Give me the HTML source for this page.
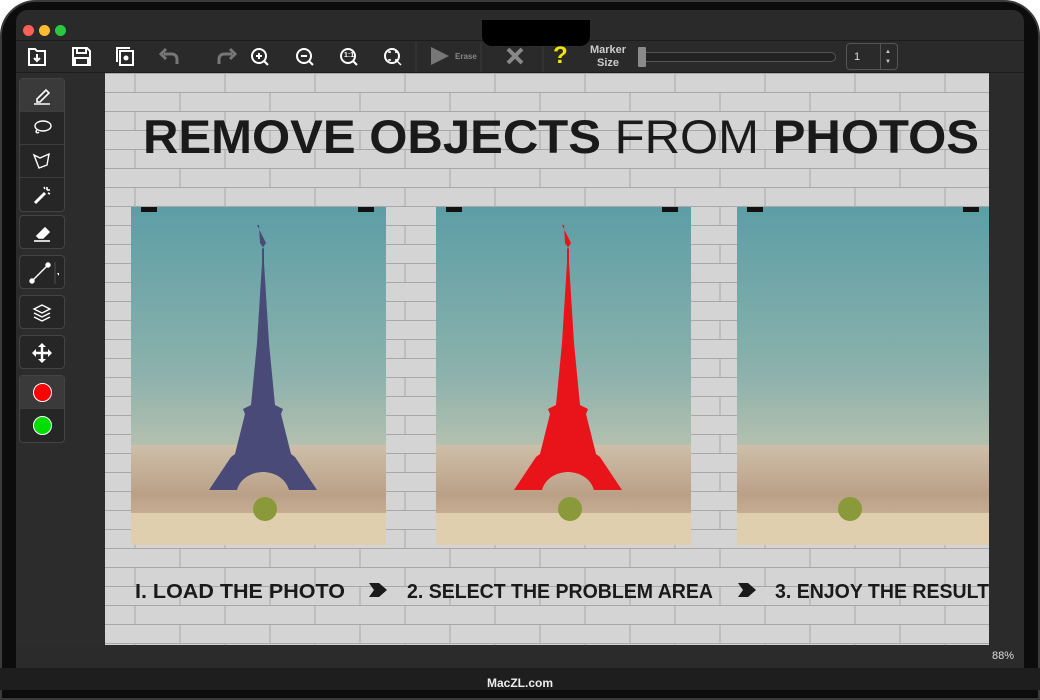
<!DOCTYPE html>
<html><head><meta charset="utf-8"><style>
*{margin:0;padding:0;box-sizing:border-box}
body{width:1040px;height:690px;background:#fff;overflow:hidden;font-family:"Liberation Sans",sans-serif;position:relative}
.bezel{position:absolute;left:0;top:0;width:1040px;height:700px;background:#0c0c0c;border-radius:36px 36px 0 0;border:2px solid #3a3a3a}
.screen{position:absolute;left:16px;top:10px;width:1008px;height:658px;background:#2b2b2b;border-radius:12px 12px 0 0;overflow:hidden}
.title{position:absolute;left:0;top:0;width:1008px;height:30px;background:#2a2a2a}
.tb{position:absolute;left:0;top:30px;width:1008px;height:33px;background:#2a2a2a;border-top:1px solid #1c1c1c;border-bottom:1px solid #1c1c1c}
.dot{position:absolute;top:15px;width:11px;height:11px;border-radius:50%}
.notch{position:absolute;left:466px;top:10px;width:108px;height:26px;background:#000;border-radius:0 0 10px 10px}
.side{position:absolute;left:0;top:63px;width:89px;height:572px;background:#2c2c2c}
.grp{position:absolute;left:3px;width:46px;background:#262626;border:1px solid #444;border-radius:4px}
.cell{height:33px;border-bottom:1px solid #3d3d3d;display:flex;align-items:center;justify-content:center}
.cell:last-child{border-bottom:none}
.status{position:absolute;left:0;top:635px;width:1008px;height:23px;background:#2b2b2b;color:#ddd;font-size:11px}
.foot{position:absolute;left:0;top:668px;width:1040px;height:22px;background:#1e1e1e;color:#eee;font-size:12px;font-weight:bold;text-align:center;line-height:30px}
</style></head><body>
<div class="bezel"></div>
<div class="screen">
 <div class="title"></div>
 <div class="dot" style="left:7px;background:#fe5f57"></div>
 <div class="dot" style="left:23px;background:#febc2e"></div>
 <div class="dot" style="left:39px;background:#28c840"></div>
 <div style="position:absolute;left:560px;top:13px;color:#aaa;font-size:11px">ng</div>
 <div class="tb"></div>
 <svg style="position:absolute;left:0;top:30px" width="1008" height="33" fill="none" stroke="#fff" stroke-width="2">
  <path d="M13 9h6l2 2h8v14H13z"/><path d="M21 14v7M18 18l3 3 3-3"/>
  <path d="M57 8h14l3 3v14H57z"/><path d="M61 8v5h9V8M59 25v-7h13v7"/>
  <rect x="104" y="11" width="13" height="14"/><path d="M101 22V8h13" /><circle cx="110" cy="18" r="1.5" fill="#fff"/>
  <g stroke="#777" stroke-width="3"><path d="M148 14h8a5 5 0 0 1 5 5v5"/><path d="M150 9l-5 5 5 5" /></g>
  <g stroke="#777" stroke-width="3"><path d="M203 24v-5a5 5 0 0 1 5-5h8"/><path d="M214 9l5 5-5 5"/></g>
  <circle cx="243" cy="16" r="7"/><path d="M248 21l4 4M240 16h6M243 13v6"/>
  <circle cx="288" cy="16" r="7"/><path d="M293 21l4 4M285 16h6"/>
  <circle cx="332" cy="16" r="7"/><path d="M337 21l4 4"/>
  <circle cx="376" cy="16" r="7"/><path d="M381 21l4 4M373 13v-1h2M379 12h1v1M373 19v1h2M379 20h1v-1" stroke-width="1.5"/>
  <path d="M400 2v30M465 2v30M527 2v30" stroke="#3a3a3a" stroke-width="1"/>
  <path d="M415 7l18 9-18 9z" fill="#777" stroke="none"/>
  <path d="M492 9l14 14M506 9L492 23" stroke="#888" stroke-width="4"/>
 </svg>
 <div style="position:absolute;left:328px;top:42px;width:9px;font-size:7px;font-weight:bold;color:#fff;text-align:center">1:1</div>
 <div style="position:absolute;left:439px;top:42px;font-size:8px;font-weight:bold;color:#888">Erase</div>
 <div style="position:absolute;left:537px;top:32px;font-size:24px;font-weight:bold;color:#f2e600">?</div>
 <div style="position:absolute;left:574px;top:34px;font-size:11px;font-weight:bold;color:#ccc;text-align:center;line-height:13px">Marker<br>Size</div>
 <div style="position:absolute;left:622px;top:42px;width:198px;height:10px;border:1px solid #555;border-radius:5px;background:#222"></div>
 <div style="position:absolute;left:622px;top:37px;width:8px;height:20px;background:#8a8a8a;border-radius:1px"></div>
 <div style="position:absolute;left:830px;top:33px;width:52px;height:27px;border:1px solid #555;border-radius:4px;color:#ddd;font-size:11px;padding:7px 0 0 7px">1</div>
 <div style="position:absolute;left:864px;top:33px;width:1px;height:27px;background:#555"></div>
 <div style="position:absolute;left:869px;top:37px;color:#ccc;font-size:6px;line-height:10px">▲<br>▼</div>
 <div class="notch"></div>
 <div class="side">
  <div class="grp" style="top:5px">
   <div class="cell" style="background:#3a3a3a"><svg width="22" height="22" stroke="#fff" fill="none" stroke-width="1.6"><path d="M6 15l9-9 3 3-9 9H6z"/><path d="M3 20h16"/></svg></div>
   <div class="cell"><svg width="22" height="22" stroke="#fff" fill="none" stroke-width="1.4"><ellipse cx="12" cy="9" rx="8" ry="5"/><path d="M6 13c-2 2 0 4 2 2"/></svg></div>
   <div class="cell"><svg width="22" height="22" stroke="#fff" fill="none" stroke-width="1.4"><path d="M3 5l6 3 9-4-2 11-8 3z"/></svg></div>
   <div class="cell"><svg width="22" height="22" stroke="#fff" fill="none" stroke-width="1.6"><path d="M4 19l10-10" stroke-width="3"/><path d="M16 3v3M19 6h-3M19 10l-2-1M13 3l1 2"/></svg></div>
  </div>
  <div class="grp" style="top:142px;height:34px"><div class="cell"><svg width="22" height="22" stroke="#fff" fill="none" stroke-width="1.6"><path d="M6 14l8-8 4 4-6 6H8z" fill="#fff"/><path d="M3 19h16"/></svg></div></div>
  <div class="grp" style="top:182px;height:34px"><div class="cell" style="justify-content:flex-start;padding-left:9px"><svg width="30" height="22" stroke="#fff" fill="#fff" stroke-width="1.4"><path d="M3 19L19 3"/><circle cx="3" cy="19" r="2"/><circle cx="19" cy="3" r="2"/><path d="M26 0v32" stroke="#444"/><path d="M28 11l4 0-2 3z" stroke="none"/></svg></div></div>
  <div class="grp" style="top:222px;height:34px"><div class="cell"><svg width="22" height="22" stroke="#fff" fill="none" stroke-width="1.4"><path d="M11 3l8 4-8 4-8-4z"/><path d="M3 11l8 4 8-4M3 15l8 4 8-4"/></svg></div></div>
  <div class="grp" style="top:262px;height:34px"><div class="cell"><svg width="22" height="22" stroke="#fff" fill="#fff" stroke-width="2.4"><path d="M11 3v16M3 11h16" /><path d="M11 1l-4 4h8zM11 21l-4-4h8zM1 11l4-4v8zM21 11l-4-4v8z" stroke="none"/></svg></div></div>
  <div class="grp" style="top:302px">
   <div class="cell" style="background:#3a3a3a"><div style="width:19px;height:19px;border-radius:50%;background:#f00;border:1.5px solid #fff"></div></div>
   <div class="cell"><div style="width:19px;height:19px;border-radius:50%;background:#0d0;border:1.5px solid #fff"></div></div>
  </div>
 </div>
 <div style="position:absolute;left:89px;top:63px;width:884px;height:572px;background:#cfcfcf;overflow:hidden">
  <svg width="884" height="572" style="position:absolute;left:0;top:0">
   <defs>
    <linearGradient id="sky" x1="0" y1="0" x2="0" y2="1"><stop offset="0" stop-color="#5c9ea6"/><stop offset="0.5" stop-color="#8db2ac"/><stop offset="0.75" stop-color="#bcc3b0"/><stop offset="1" stop-color="#cfc6ae"/></linearGradient>
    <linearGradient id="city" x1="0" y1="0" x2="0" y2="1"><stop offset="0" stop-color="#cdbfa8"/><stop offset="0.5" stop-color="#bba088"/><stop offset="1" stop-color="#d8c4a2"/></linearGradient>
    <pattern id="brick" width="90" height="38" patternUnits="userSpaceOnUse"><rect width="90" height="38" fill="#d4d4d4"/><path d="M0 0.5h90M0 19.5h90M30 0v19M75 19v19" stroke="#a8a8a8" stroke-width="1"/></pattern>
   </defs>
   <rect width="884" height="572" fill="url(#brick)"/>
   <g>
    <rect x="26" y="134" width="255" height="338" fill="url(#sky)"/><rect x="26" y="372" width="255" height="100" fill="url(#city)"/>
    <rect x="331" y="134" width="255" height="338" fill="url(#sky)"/><rect x="331" y="372" width="255" height="100" fill="url(#city)"/>
    <rect x="632" y="134" width="255" height="338" fill="url(#sky)"/><rect x="632" y="372" width="255" height="100" fill="url(#city)"/>
    <path d="M26 440h255v32H26zM331 440h255v32H331zM632 440h255v32H632z" fill="#e0cfae"/>
    <circle cx="160" cy="436" r="12" fill="#8a9a3a"/><circle cx="465" cy="436" r="12" fill="#8a9a3a"/><circle cx="745" cy="436" r="12" fill="#8a9a3a"/>
    <path d="M36 134h16v5H36zM253 134h16v5h-16zM341 134h16v5h-16zM557 134h16v5h-16zM642 134h16v5h-16zM858 134h16v5h-16z" fill="#111"/>
   </g>
   <path d="M152 152h2l1 18 4 6v14l5 80 6 62 8 4-2 5 10 40 4 3 22 33h-28c-4-14-18-18-26-18s-22 4-26 18h-28l22-33 4-3 10-40-2-5 8-4 6-62 5-80v-14l4-6z" fill="#4a4a78"/>
   <path d="M457 152h2l1 18 4 6v14l5 80 6 62 8 4-2 5 10 40 4 3 22 33h-28c-4-14-18-18-26-18s-22 4-26 18h-28l22-33 4-3 10-40-2-5 8-4 6-62 5-80v-14l4-6z" fill="#e8141a"/>
   <text x="38" y="80" font-family="Liberation Sans" font-weight="bold" font-size="47" fill="#1a1a1a" textLength="836" lengthAdjust="spacingAndGlyphs">REMOVE OBJECTS <tspan font-weight="normal">FROM</tspan> PHOTOS</text>
   <g font-family="Liberation Sans" font-size="20" font-weight="bold" fill="#1a1a1a">
    <text x="30" y="525" textLength="210" lengthAdjust="spacingAndGlyphs">I. LOAD THE PHOTO</text>
    <text x="302" y="525" textLength="306" lengthAdjust="spacingAndGlyphs">2. SELECT THE PROBLEM AREA</text>
    <text x="670" y="525" textLength="214" lengthAdjust="spacingAndGlyphs">3. ENJOY THE RESULT</text>
    <path d="M264 510h10l8 7-8 7h-10l5-7zM633 510h10l8 7-8 7h-10l5-7z"/>
   </g>
  </svg>
 </div>
 <div class="status"><span style="position:absolute;right:10px;top:5px">88%</span></div>
</div>
<div class="foot">MacZL.com</div>
</body></html>
